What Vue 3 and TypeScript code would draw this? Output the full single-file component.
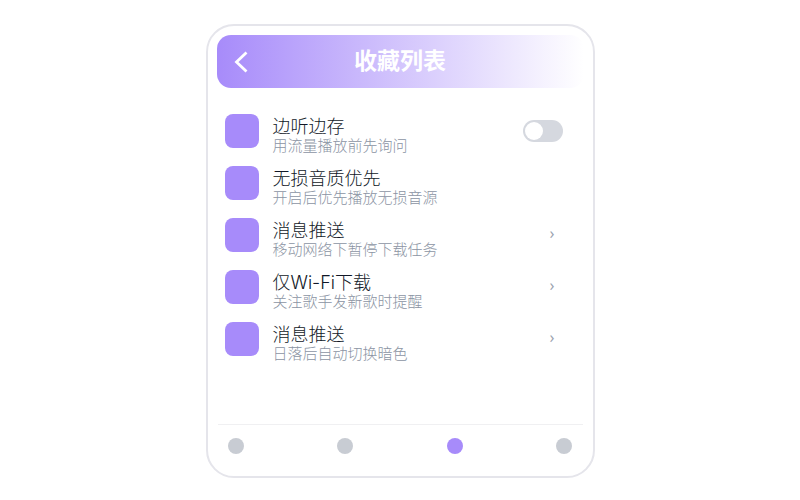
<script setup lang="ts">
import { ref } from 'vue'

interface SettingItem {
  id: string
  title: string
  note: string
  trailing: 'switch' | 'none' | 'link'
}

const items: SettingItem[] = [
  { id: 'cache', title: '边听边存', note: '用流量播放前先询问', trailing: 'switch' },
  { id: 'quality', title: '无损音质优先', note: '开启后优先播放无损音源', trailing: 'none' },
  { id: 'push', title: '消息推送', note: '移动网络下暂停下载任务', trailing: 'link' },
  { id: 'wifi', title: '仅Wi-Fi下载', note: '关注歌手发新歌时提醒', trailing: 'link' },
  { id: 'theme', title: '消息推送', note: '日落后自动切换暗色', trailing: 'link' },
]

const enabled = ref(false)
const tabs = [0, 1, 2, 3]
const activeTab = ref(2)
</script>

<template>
  <div class="page">
    <main class="card">
      <header class="header">
        <button class="back" type="button">
          <svg width="14" height="22" viewBox="0 0 14 22" fill="none" stroke="#fff" stroke-width="2.8">
            <path d="M12.5 1.5 2.5 11 12.5 20.5" />
          </svg>
        </button>
        <h1 class="heading">收藏列表</h1>
      </header>

      <ul class="list">
        <li v-for="item in items" :key="item.id" class="row">
          <span class="icon"></span>
          <label v-if="item.trailing === 'switch'" class="text" :for="item.id">
            <span class="title">{{ item.title }}</span>
            <span class="note">{{ item.note }}</span>
          </label>
          <a v-else-if="item.trailing === 'link'" class="text" :href="'#' + item.id">
            <span class="title">{{ item.title }}</span>
            <span class="note">{{ item.note }}</span>
          </a>
          <div v-else class="text">
            <span class="title">{{ item.title }}</span>
            <span class="note">{{ item.note }}</span>
          </div>
          <input v-if="item.trailing === 'switch'" :id="item.id" v-model="enabled" class="switch" type="checkbox" role="switch" />
          <span v-if="item.trailing === 'link'" class="chevron">›</span>
        </li>
      </ul>

      <nav class="tabs">
        <button
          v-for="tab in tabs"
          :key="tab"
          type="button"
          class="tab"
          :class="{ active: tab === activeTab }"
          @click="activeTab = tab"
        ></button>
      </nav>
    </main>
  </div>
</template>

<style>
body {
  background: #fff;
}
</style>

<style scoped>
.page {
  box-sizing: border-box;
  min-height: 100vh;
  padding: 24px 0 22px;
  display: flex;
  justify-content: center;
  font-family: "Noto Sans", "Noto Sans CJK SC", sans-serif;
}

.card {
  box-sizing: border-box;
  width: 100%;
  max-width: 389px;
  padding: 9px;
  display: flex;
  flex-direction: column;
  border: 2px solid #e5e5eb;
  border-radius: 28px;
  background: #fff;
}

.header {
  display: grid;
  grid-template-columns: 48px 1fr 48px;
  align-items: center;
  height: 53px;
  border-radius: 14px;
  background: linear-gradient(90deg, #a78bfa, #fff);
}

.back {
  display: flex;
  align-items: center;
  justify-content: center;
  padding: 0;
  border: 0;
  background: none;
  cursor: pointer;
}

.heading {
  margin: 0;
  padding-bottom: 4px;
  color: #fff;
  font-size: 23px;
  font-weight: 700;
  line-height: 32px;
  text-align: center;
}

.list {
  flex: 1;
  margin: 0;
  padding: 17px 21px 16px 8px;
  list-style: none;
}

.row {
  display: flex;
  align-items: center;
  gap: 14px;
  height: 52px;
}

.icon {
  flex: none;
  width: 34px;
  height: 34px;
  border-radius: 8px;
  background: #a78bfa;
}

.text {
  flex: 1;
  display: flex;
  flex-direction: column;
  padding-top: 10px;
  color: inherit;
  font-family: Inter, "Noto Sans CJK SC", sans-serif;
  font-weight: 300;
  text-decoration: none;
}

.title {
  color: #111827;
  font-size: 18px;
  line-height: 20px;
}

.note {
  color: #8b94a3;
  font-size: 15px;
  line-height: 18px;
}

.switch {
  appearance: none;
  flex: none;
  display: flex;
  align-items: center;
  box-sizing: border-box;
  width: 40px;
  height: 22px;
  margin: 0;
  padding: 0 2px;
  border-radius: 11px;
  background: #d5d8df;
  cursor: pointer;
}

.switch::before {
  content: "";
  width: 18px;
  height: 18px;
  border-radius: 50%;
  background: #fff;
}

.switch:checked {
  justify-content: flex-end;
  background: #a78bfa;
}

.chevron {
  padding: 0 8px 4px 0;
  color: #9ca3af;
  font-size: 16px;
  line-height: 20px;
}

.tabs {
  display: flex;
  align-items: center;
  justify-content: space-between;
  height: 42px;
  margin: 0 1px;
  padding: 0 10px;
  border-top: 1px solid #f0f0f2;
}

.tab {
  width: 16px;
  height: 16px;
  padding: 0;
  border: 0;
  border-radius: 50%;
  background: #c8ccd3;
  cursor: pointer;
}

.tab.active {
  background: #a78bfa;
}
</style>
